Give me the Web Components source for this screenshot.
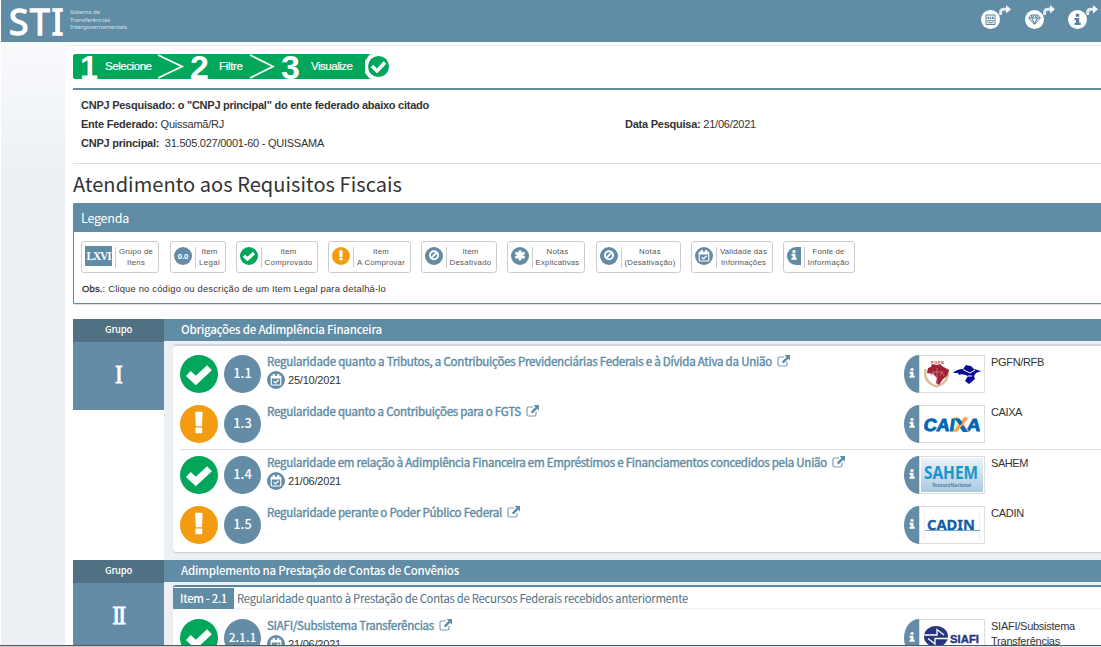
<!DOCTYPE html>
<html lang="pt-BR">
<head>
<meta charset="utf-8">
<title>STI - Sistema de Transferências Intergovernamentais</title>
<style>
html,body{margin:0;height:100%;overflow:hidden;background:#fff}
body{font-family:"Liberation Sans",Arial,sans-serif;color:#333}
</style>
</head>
<body>
<sti-app></sti-app>
<script>
const SSP='"Noto Sans CJK SC","Open Sans",sans-serif';
const ICONS={
check:'<path fill="none" stroke="currentColor" stroke-width="7" d="M8.300 18.500l7.500 7L29.500 12.700"/>',
exclaim:'<path fill="currentColor" d="M15.200 7.500q0-.8.8-.8h5.800q.8 0 .8.800l-.6 13.200q0 .6-.7.600h-4.800q-.7 0-.7-.6zM15.500 23.200q0-.7.7-.7h5.400q.7 0 .7.700v4.300q0 .7-.7.700h-5.400q-.7 0-.7-.7z"/>',
ban:'<circle cx="19" cy="17.500" r="8.500" fill="none" stroke="currentColor" stroke-width="4"/><path stroke="currentColor" stroke-width="4" d="M13 23.500L25 11.500"/>',
asterisk:'<path stroke="currentColor" stroke-width="6.500" stroke-linecap="round" d="M19 9.500v16M12 13.500l14 8M26 13.500l-14 8"/>',
calendar:'<rect x="9" y="11.500" width="20" height="18" rx="1.500" fill="none" stroke="currentColor" stroke-width="2.400"/><path fill="currentColor" d="M8 10h22v6H8zM12 6.500h4.500v6H12zM21.500 6.500H26v6h-4.500z"/><path fill="none" stroke="currentColor" stroke-width="2.700" d="M14.500 21.500l3.500 3.500 6.500-6.500"/>',
info:'<path fill="currentColor" d="M15.500 7.500h7v6h-7zM13 16H22.500v9.500h3v4.500H13v-4.500h3V20.500h-3z"/>',
news:'<path fill="none" stroke="currentColor" stroke-width="2" d="M10 10h18v19H10zM12 21.500h14M13 25.500h12"/><path stroke="currentColor" stroke-width="4.500" stroke-dasharray="3 1.500" d="M13 15.500h13"/>',
gem:'<path fill="none" stroke="currentColor" stroke-width="2" stroke-linejoin="round" d="M7.500 16l5-6h13l5 6L19 29zM7.500 16h23M13.500 16L19 28l5.500-12M12.500 10l2 6 4.500-6 4.500 6 2-6"/>'
};
function define(name,css,html,init){
  customElements.define(name,class extends HTMLElement{
    constructor(){super();this.attachShadow({mode:'open'})}
    connectedCallback(){
      const t=document.createElement('template');
      t.innerHTML='<style>'+css+'</style>'+(typeof html==='function'?html(this):html);
      this.shadowRoot.replaceChildren(t.content.cloneNode(true));
      if(init)init(this);
    }
  });
}
/* Text run tracked to a given width */
define('fit-text',':host{display:inline-block;white-space:pre}','<slot></slot>',el=>{
  const w=+el.getAttribute('w'),n=el.textContent.length,cur=el.getBoundingClientRect().width;
  if(w&&cur){el.style.letterSpacing=((w-cur)/n)+'px'}
});
define('round-icon',':host{display:block;flex:none;width:var(--s,38px);height:var(--s,38px);border-radius:50%;background:#648ca6;color:#fff}:host([kind=check]){background:#00a65a}:host([kind=exclaim]){background:#f39c12}:host([invert]){background:#fff;color:#54839d}svg{display:block;width:100%;height:100%}',
 el=>'<svg viewBox="0 0 38 38">'+ICONS[el.getAttribute('kind')]+'</svg>');
define('share-link',':host{display:flex;width:31px;height:24px;align-items:flex-end;--s:19px}svg{align-self:flex-start;margin-left:-1px}',
 el=>`<round-icon invert kind="${el.getAttribute('kind')}"></round-icon><svg width="12" height="11" viewBox="0 0 12 11"><path d="M1.600 10V7.500q0-3.300 3.300-3.300H8" fill="none" stroke="#dfe9ef" stroke-width="3"/><path d="M7 0l5 4.200-5 4.200z" fill="#f2f6f8"/></svg>`);
define('top-bar',`:host{display:flex;height:42px;margin-left:1px;background:#608ca5;color:#fff;box-sizing:border-box;padding-left:8px}
.logo{font:35.500px/42px "Noto Sans",sans-serif;-webkit-text-stroke:1.300px #fff;height:42px}
.sub{font:6px/7.700px "Noto Sans",sans-serif;color:#d3e0e8;margin:9px 0 0 5px;display:flex;flex-direction:column}
.links{margin-left:auto;display:flex;gap:12.500px;padding:5px 0 0;margin-right:2px}.links>*{flex:none}`,
`<div class="logo"><fit-text w="56">STI</fit-text></div><div class="sub"><span><fit-text w="30">Sistema de</fit-text></span><span><fit-text w="40">Transferências</fit-text></span><span><fit-text w="57">Intergovernamentais</fit-text></span></div>
<div class="links"><share-link kind="news"></share-link><share-link kind="gem"></share-link><share-link kind="info"></share-link></div>`);
define('step-bar',`:host{display:block;margin:8px 0 0 8px;width:317px;height:25px}svg{display:block;overflow:visible}text{fill:#fff;font-family:"Liberation Sans",sans-serif}.n{font-weight:bold;font-size:34px}.t{font-size:11.500px;stroke:#fff;stroke-width:.2px}`,
`<svg width="317" height="25" viewBox="0 0 317 25"><path fill="#00a65a" d="M1.500 0H297l-5 7v12l5 6H1.500L0 23.500v-22z"/><path fill="#00a65a" d="M297 0h14v25h-14z"/>
<text class="n" x="7" y="24.700" textLength="18" lengthAdjust="spacingAndGlyphs">1</text><text class="t" x="32" y="16" textLength="47">Selecione</text><path d="M85 1l24 11.500L85 24" fill="none" stroke="#fff" stroke-width="1.800"/>
<text class="n" x="117" y="24.700">2</text><text class="t" x="146" y="16" textLength="24">Filtre</text><path d="M177 1l23 11.500L177 24" fill="none" stroke="#fff" stroke-width="1.800"/>
<text class="n" x="208" y="24.500">3</text><text class="t" x="238" y="16" textLength="42">Visualize</text><path d="M298 0h19v25h-19q-6-5-6-12.500T298 0z" fill="#fff"/><circle cx="305.500" cy="12.500" r="10.500" fill="#00a65a"/><path d="M299 12l5 5 8-8.500" fill="none" stroke="#fff" stroke-width="3.600"/></svg>`);
define('search-info',`:host{display:block;margin:9px 0 0 8px;border-top:2px solid #608ca5;border-bottom:1px solid #dedfe1;font-size:11px;line-height:19px;padding:6px 0 0 8px;box-sizing:border-box;height:76px;color:#333}.r{display:grid;grid-template-columns:544px 1fr}b{font-weight:bold}`,
`<div><fit-text w="348"><b>CNPJ Pesquisado: o "CNPJ principal" do ente federado abaixo citado</b></fit-text></div>
<div class="r"><span><fit-text w="143"><b>Ente Federado:</b> Quissamã/RJ</fit-text></span><span><fit-text w="131"><b>Data Pesquisa:</b> 21/06/2021</fit-text></span></div>
<div><fit-text w="243"><b>CNPJ principal:</b>  31.505.027/0001-60 - QUISSAMA</fit-text></div>`);
define('legend-item',`:host{display:flex;box-sizing:border-box;height:32px;border:1px solid #ccc;border-radius:3px;align-items:center;padding:0 2px 0 3px;background:#fff;--s:18px}
.i{flex:none;margin:-2px 0 0}.t{flex:1;border-left:1px solid #ccc;margin-left:3px;font-size:7.800px;line-height:11px;text-align:center;color:#555;height:21px;white-space:pre;display:flex;flex-direction:column;align-items:center;justify-content:center}
.g{font:bold 11.500px/20px "Liberation Serif",serif;background:#608ca5;color:#fff;width:27px;text-align:center;height:20px}.n{width:18px;height:18px;border-radius:50%;background:#648ca6;color:#fff;font:bold 7.500px/18px "Noto Sans",sans-serif;text-align:center}.f{background:#608ca5;border-radius:9px 0 0 9px;width:14px;height:18px;overflow:hidden;color:#fff}.f svg{display:block;width:16px;height:16px;margin-left:-1px}`,
el=>{const k=el.getAttribute('kind');const i=k==='group'?'<div class="g"><fit-text w="24">LXVI</fit-text></div>':k==='num'?'<div class="n">0.0</div>':k==='source'?'<div class="f"><svg viewBox="0 0 38 38">'+ICONS.info+'</svg></div>':`<round-icon kind="${k}"></round-icon>`;
const ws=el.getAttribute('ws').split(',');
return `<div class="i">${i}</div><div class="t">${el.getAttribute('label').split('|').map((l,j)=>`<fit-text w="${ws[j]}">${l}</fit-text>`).join('')}</div>`});
const LEG=[['group',78,'Grupo de|Itens',11,'34,18'],['num',56,'Item|Legal',10,'16,21'],['check',82,'Item|Comprovado',10,'16,48'],['exclaim',83,'Item|A Comprovar',10,'16,48'],['ban',76,'Item|Desativado',10,'16,42'],['asterisk',78,'Notas|Explicativas',11,'22,44'],['ban',85,'Notas|(Desativação)',10,'22,51'],['calendar',82,'Validade das|Informações',10,'47,45'],['source',72,'Fonte de|Informação',0,'32,42']];
define('legend-panel',`:host{display:block;margin-left:8px;border:1px solid #608ca5;border-right:0;border-radius:2px 0 0 2px;height:101px;box-sizing:border-box;box-shadow:0 1px 1px #ddd}
.h{background:#608ca5;color:#fff;height:28px;font:12.500px/28px ${SSP};padding-left:7px}.l{display:flex;padding:9px 0 0 7px}.o{font-size:9.400px;line-height:12px;margin:10px 0 0 8px}.o b{font-weight:normal;-webkit-text-stroke:.3px #333}`,
`<div class="h"><fit-text w="48">Legenda</fit-text></div><div class="l">${LEG.map(l=>`<legend-item kind="${l[0]}" style="width:${l[1]}px;margin-right:${l[3]}px" label="${l[2]}" ws="${l[4]}"></legend-item>`).join('')}</div><div class="o"><fit-text w="304"><b>Obs.</b>: Clique no código ou descrição de um Item Legal para detalhá-lo</fit-text></div>`);
const LOGOS={
pgfn:`<path d="M5.500 13q-2.500 13 11 17.500Q30 26 27.500 13" fill="none" stroke="#d8c39c" stroke-width="2.500"/><path d="M8 12l3-1 1-3 5 1 3-1 2 2 7 4-2 6-4 3-4 6-3-2 1-5-4-4-6-1z" fill="#a31f35"/><path d="M17 12v16M12 16h11M11 20l2-4 2 4M20 20l2-4 2 4" stroke="#c98080" stroke-width=".8" fill="none"/><text x="11" y="8" font-size="4" font-weight="bold" fill="#b33" textLength="13">PGFN</text><path d="M33 17q4-4 10-4l3-4 5 1 3 3 7 2-5 2-2 3 1 3-6 5-4-3 3-5q-6-3-9-1l-1-2z" fill="#0a0a9a"/><path d="M43 13.500l7 3.500 5-3M48 20h4" stroke="#fff" stroke-width="1" fill="none"/>`,
caixa:`<g font-family="Liberation Sans" font-weight="bold" font-size="17.500" fill="#0068b3" stroke="#0068b3" stroke-width=".9"><text transform="translate(3 25.300) skewX(-8)" textLength="31" lengthAdjust="spacingAndGlyphs">CAI</text><text transform="translate(46 25.300) skewX(-8)" textLength="14" lengthAdjust="spacingAndGlyphs">A</text></g><text x="34" y="25.300" font-family="Liberation Sans" font-weight="bold" font-size="17.500" fill="#f7a24b" stroke="#f7a24b" textLength="14" lengthAdjust="spacingAndGlyphs">X</text><path d="M34.500 12.500h5l3 4-2.500 3z" fill="#0068b3"/><path d="M43 19l5 7h-5l-3-4z" fill="#0068b3"/>`,
sahem:`<defs><linearGradient id="g" x2="0" y2="1"><stop stop-color="#eaf4fa"/><stop offset="1" stop-color="#abc9df"/></linearGradient></defs><path fill="url(#g)" d="M1 1h62v34H1z"/><text x="4" y="22" font-family="Noto Sans" font-weight="bold" font-size="18" fill="#1695cf" textLength="54" lengthAdjust="spacingAndGlyphs">SAHEM</text><text x="12" y="30" font-family="Noto Sans" font-size="4.500" font-weight="bold" fill="#5580a9" textLength="39" lengthAdjust="spacingAndGlyphs">TesouroNacional</text>`,
cadin:`<path d="M4.500 3v30M59.500 3v30" stroke="#eee"/><text x="7" y="22.500" font-family="Noto Sans" font-weight="bold" font-size="15" fill="#155ca2" stroke="#155ca2" stroke-width=".3" textLength="48" lengthAdjust="spacingAndGlyphs">CADIN</text><path d="M5 23.500h55" stroke="#67b2dc"/>`,
siafi:`<ellipse cx="16" cy="16.500" rx="12" ry="10.500" fill="#27357e"/><path d="M3 15h14V9.500l7 5.500M29 18.500H15V24l-7-5.500" stroke="#fff" stroke-width="1.300" fill="none"/><text x="30" y="23" font-family="Liberation Sans" font-weight="bold" font-size="11.500" fill="#27357e" stroke="#27357e" stroke-width=".4" textLength="29" lengthAdjust="spacingAndGlyphs">SIAFI</text>`};
define('source-tag',`:host{display:grid;grid-template-columns:15px 66px 1fr}.i{height:38px;background:#648ca6;border-radius:15px 0 0 15px/19px 0 0 19px;color:#fff}.i svg{display:block;width:16px;height:16px;margin:10px 0 0 0}.b{height:38px;border:1px solid #ddd;box-sizing:border-box}.b svg{display:block}.n{font-size:11px;line-height:15px;margin-left:6px}`,
el=>`<div class="i"><svg viewBox="0 0 38 38">${ICONS.info}</svg></div><div class="b"><svg width="64" height="36" viewBox="0 0 64 36">${LOGOS[el.getAttribute('logo')]}</svg></div><div class="n">${el.getAttribute('label').split('|').map((l,j)=>`<fit-text w="${el.getAttribute('lw').split(',')[j]}">${l}</fit-text>`).join('<br>')}</div>`);
define('legal-item',`:host{display:grid;grid-template-columns:38px 37px 631px 1fr;column-gap:6px;height:50px;margin-left:7px}
.c{width:37px;height:38px;border-radius:50%;background:#648ca6;color:#fff;font:500 12.800px/35px ${SSP};text-align:center}.c.s{font-size:12px}
.t{font:400 11.500px/15px ${SSP};color:#608ca5;display:flex;gap:5px;align-items:center;height:15px;-webkit-text-stroke:.4px #608ca5;margin-top:-1px}.t svg{margin-top:-1px}.d{display:flex;align-items:center;gap:3px;font-size:11px;line-height:18px;--s:18px;margin-top:2px}`,
el=>{const a=n=>el.getAttribute(n);return `<round-icon kind="${a('status')}"></round-icon><div class="c ${a('num').length>3?'s':''}">${a('num')}</div><div class="m"><div class="t"><fit-text w="${a('w')}">${a('label')}</fit-text><svg width="13" height="12" viewBox="0 0 13 12"><path d="M7 2H2.500Q1 2 1 3.500v6Q1 11 2.500 11h6Q10 11 10 9.500V7" fill="none" stroke="#7b9fb4" stroke-width="1.200"/><path d="M7.500 0H13v5.500L11.300 3.800 6.500 8.500 4.800 6.800 9.500 2z" fill="#608ca5"/></svg></div>${a('date')?`<div class="d"><round-icon kind="calendar"></round-icon><fit-text w="53">${a('date')}</fit-text></div>`:''}</div><source-tag logo="${a('logo')}" label="${a('source')}" lw="${a('lw')}"></source-tag>`});
define('group-section',`:host{display:grid;grid-template-columns:91px 1fr;margin-left:8px}.l{background:#fff;color:#fff;text-align:center}.gh{height:23px;background:#4f7183;font:500 9.500px/21px ${SSP};}.gn{background:#648ca6;height:68px;font:24px/64px "Liberation Serif",serif;-webkit-text-stroke:1px #fff}
.gn span{display:inline-block;letter-spacing:-1.500px;transform:scale(.92,1.080)}
.r{background:#ecf0f5}.rh{height:22px;background:#608ca5;color:#fff;font:500 11.500px/21px ${SSP};padding-left:17px}.box{margin:3px 0 0 9px;border-top:2px solid #d2d6de;background:#fff;border-radius:3px 0 0 3px;box-shadow:0 1px 1px #ccc}:host([sub]) .box{border-top-color:#5c87a1}`,
el=>`<div class="l"><div class="gh"><fit-text w="27">Grupo</fit-text></div><div class="gn"><span>${el.getAttribute('num')}</span></div></div><div class="r"><div class="rh"><fit-text w="${el.getAttribute('w')}">${el.getAttribute('label')}</fit-text></div><div class="box"><slot></slot></div></div>`);
define('sub-heading',`:host{display:flex;height:22px;border-bottom:1px solid #f0f0f0;box-sizing:border-box;padding-top:1px;margin-bottom:10px}.a{background:#608ca5;color:#fff;width:61px;text-align:center;font:500 11.300px/20px ${SSP};height:21px}.b{font:11.300px/21px ${SSP};color:#507184;margin-left:3px}`,
`<div class="a"><fit-text w="47">Item - 2.1</fit-text></div><div class="b"><fit-text w="451">Regularidade quanto à Prestação de Contas de Recursos Federais recebidos anteriormente</fit-text></div>`);
define('sti-app',`:host{display:flex;flex-direction:column;width:1101px;height:647px;overflow:hidden}
.m{display:grid;grid-template-columns:64px 1fr;margin-left:1px;height:603px;overflow:hidden}.side{background:linear-gradient(#f9fafc 0,#ecf0f5 130px)}.main{background:#fff}.top{height:4px;background:#fafbfc;border-bottom:1px solid #f0f0f1;box-sizing:border-box}
h1{font:20px/39px ${SSP};height:39px;margin:0 0 0 8px;color:#333}.main{min-width:0}
.s1{margin-top:15px;height:241px}.sep{height:0;border-top:1px solid #ddd;margin-left:7px;margin-top:-6px;margin-bottom:6px}.last{height:46px}
.foot{height:2px;flex:none;border-top:1px solid #555;box-sizing:border-box;background:linear-gradient(90deg,#ccc 337px,#dceef2 337px)}.p{height:9px}`,
`<top-bar></top-bar><div class="m"><div class="side"></div><div class="main"><div class="top"></div><step-bar></step-bar><search-info></search-info><h1><fit-text w="329">Atendimento aos Requisitos Fiscais</fit-text></h1><legend-panel></legend-panel>
<group-section class="s1" num="I" label="Obrigações de Adimplência Financeira" w="201"><div class="p"></div>
<legal-item status="check" num="1.1" label="Regularidade quanto a Tributos, a Contribuições Previdenciárias Federais e à Dívida Ativa da União" w="505" date="25/10/2021" logo="pgfn" source="PGFN/RFB" lw="53"></legal-item>
<legal-item status="exclaim" num="1.3" label="Regularidade quanto a Contribuições para o FGTS" w="254" logo="caixa" source="CAIXA" lw="31"></legal-item><div class="sep"></div>
<legal-item status="check" num="1.4" label="Regularidade em relação à Adimplência Financeira em Empréstimos e Financiamentos concedidos pela União" w="560" date="21/06/2021" logo="sahem" source="SAHEM" lw="37"></legal-item>
<legal-item class="last" status="exclaim" num="1.5" label="Regularidade perante o Poder Público Federal" w="235" logo="cadin" source="CADIN" lw="33"></legal-item></group-section>
<group-section sub num="II" label="Adimplemento na Prestação de Contas de Convênios" w="278"><sub-heading></sub-heading>
<legal-item status="check" num="2.1.1" label="SIAFI/Subsistema Transferências" w="167" date="21/06/2021" logo="siafi" source="SIAFI/Subsistema|Transferências" lw="84,69"></legal-item></group-section></div></div><div class="foot"></div>`);
</script>
</body>
</html>
